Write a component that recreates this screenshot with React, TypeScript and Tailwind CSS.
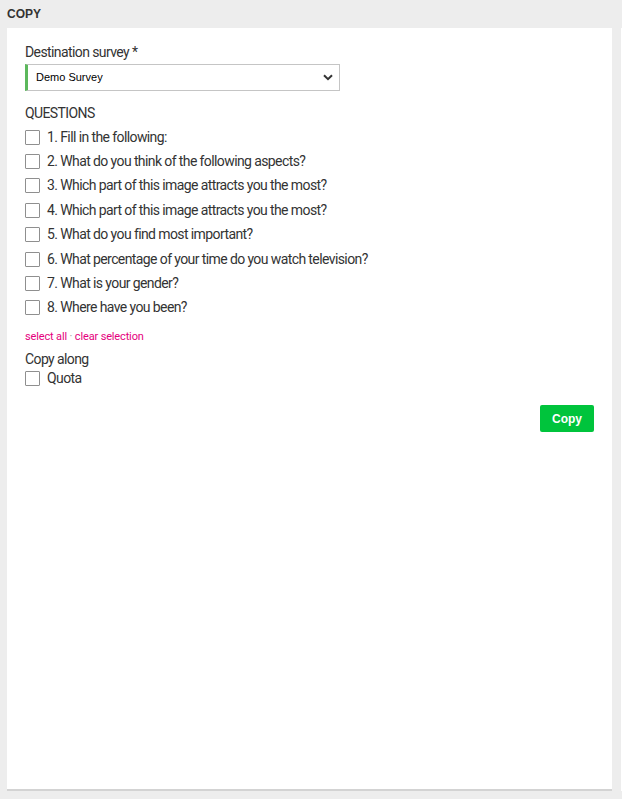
import React from 'react';

const questions = [
  '1. Fill in the following:',
  '2. What do you think of the following aspects?',
  '3. Which part of this image attracts you the most?',
  '4. Which part of this image attracts you the most?',
  '5. What do you find most important?',
  '6. What percentage of your time do you watch television?',
  '7. What is your gender?',
  '8. Where have you been?',
];

const Box = () => <span className="w-[15px] h-[15px] border border-[#8f8f8f] bg-white shrink-0 rounded-[1px]" />;

export default function App() {
  return (
    <div className="w-[622px] h-[799px] bg-[#ededed] relative overflow-hidden font-['Roboto',sans-serif] text-[#333]">
      <div className="h-[28px] pl-[7px] pt-[7px] text-[12px] font-bold text-[#333] leading-[14px] font-['Liberation_Sans',Arial,sans-serif]">COPY</div>
      <div className="absolute right-0 top-[28px] w-[1px] h-[763px] bg-white" />
      <div className="ml-[7px] w-[605px] h-[761px] bg-white shadow-[0_2px_0_#d3d3d3] pt-[16px] pl-[18px]">
        <div className="text-[14px] leading-[16px] tracking-[-0.6px]">Destination survey *</div>
        <div className="mt-[4px] w-[315px] h-[27px] border border-[#c5c5c5] border-l-[3px] border-l-[#5cb85c] flex items-center justify-between pl-[8px] pr-[6px]">
          <span className="text-[11px] text-black font-['Liberation_Sans',Arial,sans-serif]">Demo Survey</span>
          <svg width="10" height="7" viewBox="0 0 10 7">
            <path d="M1 1.2 L5 5.2 L9 1.2" fill="none" stroke="#333" strokeWidth="2" />
          </svg>
        </div>
        <div className="mt-[14px] text-[14px] leading-[16px] tracking-[-0.6px]">QUESTIONS</div>
        <div className="mt-[4px] flex flex-col">
          {questions.map((q) => (
            <div key={q} className="h-[24.4px] flex items-center gap-[7px] text-[14px] tracking-[-0.6px]">
              <Box />
              <span>{q}</span>
            </div>
          ))}
        </div>
        <div className="mt-[10px] text-[11px] leading-[13px] tracking-[-0.15px] text-[#e5007d]">
          select all <span className="text-[#999]">·</span> clear selection
        </div>
        <div className="mt-[8px] text-[14px] leading-[16px] tracking-[-0.6px]">Copy along</div>
        <div className="h-[22px] flex items-center gap-[7px] text-[14px] tracking-[-0.6px]">
          <Box />
          <span>Quota</span>
        </div>
        <div className="flex justify-end pr-[18px] mt-[16px]">
          <button className="w-[54px] h-[27px] bg-[#00c43c] text-white text-[12px] font-bold rounded-[2px] font-['Liberation_Sans',Arial,sans-serif]">Copy</button>
        </div>
      </div>
    </div>
  );
}
